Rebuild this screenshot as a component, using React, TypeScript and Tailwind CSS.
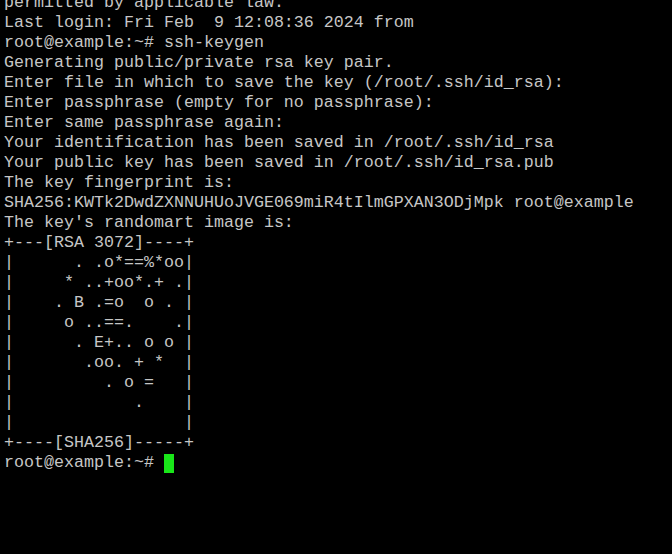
import React from "react";

const lines: string[] = [
  "permitted by applicable law.",
  "Last login: Fri Feb  9 12:08:36 2024 from",
  "root@example:~# ssh-keygen",
  "Generating public/private rsa key pair.",
  "Enter file in which to save the key (/root/.ssh/id_rsa):",
  "Enter passphrase (empty for no passphrase):",
  "Enter same passphrase again:",
  "Your identification has been saved in /root/.ssh/id_rsa",
  "Your public key has been saved in /root/.ssh/id_rsa.pub",
  "The key fingerprint is:",
  "SHA256:KWTk2DwdZXNNUHUoJVGE069miR4tIlmGPXAN3ODjMpk root@example",
  "The key's randomart image is:",
  "+---[RSA 3072]----+",
  "|      . .o*==%*oo|",
  "|     * ..+oo*.+ .|",
  "|    . B .=o  o . |",
  "|     o ..==.    .|",
  "|      . E+.. o o |",
  "|       .oo. + *  |",
  "|         . o =   |",
  "|            .    |",
  "|                 |",
  "+----[SHA256]-----+",
];

export default function App() {
  return (
    <div className="w-[672px] h-[554px] bg-black overflow-hidden">
      <div
        className="mt-[-7px] pl-[4px] text-[#c6c6c6] text-[16.67px] leading-[20px] whitespace-pre"
        style={{ fontFamily: '"Liberation Mono", "Courier New", monospace' }}
      >
        {lines.map((l, i) => (
          <div key={i} className="h-[20px]">
            {l}
          </div>
        ))}
        <div className="h-[20px] flex items-center">
          <span>root@example:~# </span>
          <span className="inline-block w-[10px] h-[19px] bg-[#19e619]" />
        </div>
      </div>
    </div>
  );
}
